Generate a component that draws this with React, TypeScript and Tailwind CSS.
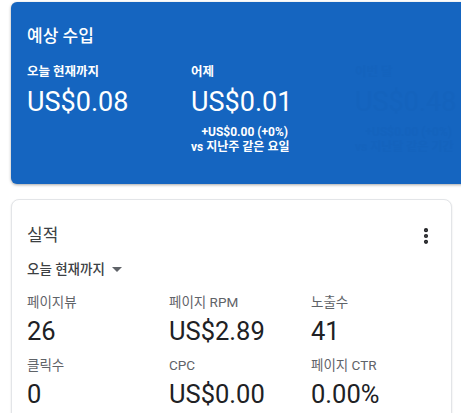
import { MoreVertical } from "lucide-react";

const font = { fontFamily: 'Roboto, "Noto Sans CJK KR", sans-serif' };

const metrics = [
  ["페이지뷰", "26"],
  ["페이지 RPM", "US$2.89"],
  ["노출수", "41"],
  ["클릭수", "0"],
  ["CPC", "US$0.00"],
  ["페이지 CTR", "0.00%"],
];

export default function App() {
  return (
    <div className="h-[413px] w-[461px] overflow-hidden bg-white" style={font}>
      <div className="ml-[11px] mt-[2px] h-[182px] w-[470px] rounded-[6px] bg-[#1565c0] pl-4 pt-[22px] text-white shadow-[0_1px_3px_rgba(0,0,0,0.35)]">
        <h2 className="text-[17px] font-medium leading-[24px]">예상 수입</h2>
        <div className="mt-[16px] flex">
          <div className="w-[164px]">
            <div className="text-[12.5px] font-bold leading-[16px]">오늘 현재까지</div>
            <div className="mt-[6px] text-[27px] leading-[32px]">US$0.08</div>
          </div>
          <div className="flex w-[164px] flex-col items-start">
            <div className="text-[12.5px] font-bold leading-[16px]">어제</div>
            <div className="mt-[6px] text-[27px] leading-[32px]">US$0.01</div>
            <div className="mt-[7px] w-[97px] text-right text-[12px] font-bold leading-[15px]">
              <div>+US$0.00 (+0%)</div>
              <div className="whitespace-nowrap">vs 지난주 같은 요일</div>
            </div>
          </div>
          <div className="flex flex-col items-start text-[#1463bd]">
            <div className="text-[12.5px] font-bold leading-[16px]">이번 달</div>
            <div className="mt-[6px] text-[27px] leading-[32px]">US$0.48</div>
            <div className="mt-[7px] w-[97px] text-right text-[12px] font-bold leading-[15px]">
              <div>+US$0.00 (+0%)</div>
              <div className="whitespace-nowrap">vs 지난달 같은 기간</div>
            </div>
          </div>
        </div>
      </div>

      <div className="ml-[11px] mt-[15px] h-[240px] w-[441px] rounded-[8px] border border-[#e3e5e8] bg-white pl-[15px] pr-3 pt-[23px] shadow-[0_1px_2px_rgba(0,0,0,0.12)]">
        <div className="flex items-center justify-between">
          <h2 className="text-[17px] leading-[24px] text-[#3c4043]">실적</h2>
          <MoreVertical className="mr-[3px] mt-[2px] h-[20px] w-[20px] text-[#202124]" strokeWidth={3} />
        </div>
        <div className="mt-[14px] flex items-center gap-[7px] text-[13.5px] font-medium leading-[16px] text-[#3c4043]">
          오늘 현재까지
          <svg width="10" height="5" viewBox="0 0 10 5">
            <path d="M0 0h10L5 5z" fill="#5f6368" />
          </svg>
        </div>
        <div className="mt-[16px] grid grid-cols-[142px_142px_1fr] gap-y-[9px]">
          {metrics.map(([label, value]) => (
            <div key={label}>
              <div className="text-[13.5px] leading-[18px] text-[#5f6368]">{label}</div>
              <div className="mt-[4px] text-[25.5px] leading-[32px] text-[#202124]">{value}</div>
            </div>
          ))}
        </div>
      </div>
    </div>
  );
}
